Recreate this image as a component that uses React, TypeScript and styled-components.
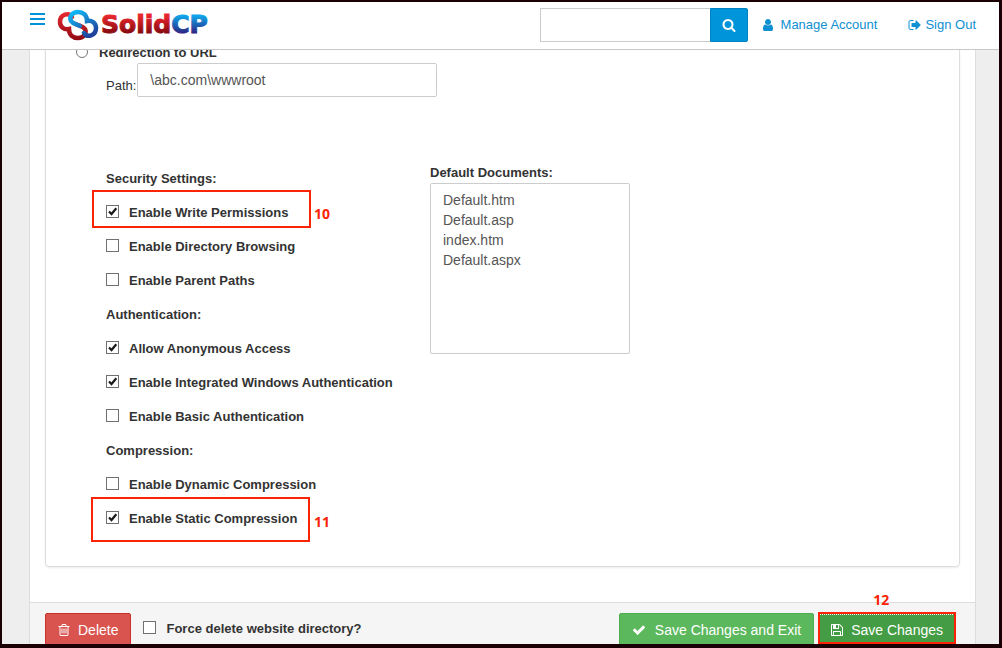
import React from "react";
import styled, { createGlobalStyle, css } from "styled-components";

const GlobalStyle = createGlobalStyle`
  *, *::before, *::after { box-sizing: border-box; }
  body {
    margin: 0;
    font-family: "Liberation Sans", Arial, sans-serif;
    font-size: 13px;
    line-height: 20px;
    color: #333;
  }
`;

const Frame = styled.div`
  display: flex;
  flex-direction: column;
  height: 100vh;
  overflow: hidden;
  border: solid #1a0005;
  border-width: 2px 3px 4px 2px;
  background: #eee;
`;

const Header = styled.header`
  display: flex;
  align-items: center;
  flex: none;
  height: 48px;
  padding: 0 23px 1px 28px;
  border-bottom: 1px solid #c8c8c8;
  background: #fff;
`;

const MenuButton = styled.button`
  display: flex;
  flex-direction: column;
  gap: 3px;
  width: 15px;
  margin: 0 12px 12px 0;
  padding: 0;
  border: 0;
  background: none;
`;

const MenuBar = styled.span`
  height: 2px;
  width: 15px;
  background: #0092d8;
`;

const LogoLink = styled.a`
  display: flex;
  margin-right: auto;
`;

const SearchForm = styled.form`
  display: flex;
  height: 34px;
  margin-right: 13px;
`;

const SearchInput = styled.input`
  width: 170px;
  padding: 6px 12px;
  border: 1px solid #ccc;
  border-right: 0;
  font: 14px "Liberation Sans", Arial, sans-serif;
`;

const SearchButton = styled.button`
  display: flex;
  align-items: center;
  justify-content: center;
  width: 38px;
  padding: 0;
  border: 1px solid #0083c2;
  border-radius: 0 2px 2px 0;
  background: #0095db;
  color: #fff;
`;

const Nav = styled.nav`
  display: flex;
  gap: 31px;
`;

const NavLink = styled.a<{ $gap: number }>`
  display: flex;
  align-items: center;
  gap: ${(p) => p.$gap}px;
  color: #0e90d2;
  text-decoration: none;
`;

const Viewport = styled.main`
  flex: 1;
  min-height: 0;
  overflow: hidden;
  padding: 0 23px 0 27px;
`;

const Panel = styled.section`
  border: solid #ddd;
  border-width: 0 1px;
  background: #fff;
`;

const PanelBody = styled.div`
  display: flow-root;
  padding: 0 15px 35px;
`;

/* The page is scrolled, so the card begins above the visible area. */
const Card = styled.div`
  margin-top: -8px;
  padding: 0 30px 30px;
  border: 1px solid #ddd;
  border-radius: 4px;
  box-shadow: 0 1px 2px rgba(0, 0, 0, 0.08);
`;

const RadioRow = styled.label`
  display: flex;
  align-items: center;
  gap: 11px;
  font-weight: bold;
`;

const Radio = styled.input`
  width: 12px;
  height: 12px;
  margin: 0 0 2px;
`;

const Fields = styled.div`
  padding-left: 30px;
`;

const PathRow = styled.label`
  display: flex;
  align-items: flex-end;
  gap: 1px;
  margin-bottom: 65px;
  line-height: 22px;
`;

const PathInput = styled.input`
  width: 300px;
  height: 34px;
  padding: 6px 12px;
  border: 1px solid #ccc;
  border-radius: 2px;
  color: #555;
  font: 14px "Liberation Sans", Arial, sans-serif;
`;

const Columns = styled.div`
  display: grid;
  grid-template-columns: 324px 200px;
  align-items: start;
`;

const GroupTitle = styled.h2`
  margin: 0;
  font-size: 13px;
  line-height: 34px;
`;

const OptionRow = styled.div`
  position: relative;
  display: flex;
  align-items: center;
  height: 34px;
`;

const CheckLabel = styled.label`
  display: flex;
  align-items: center;
  gap: 10px;
  font-weight: bold;
`;

const CheckBoxWrap = styled.span`
  display: grid;
  width: 13px;
  height: 13px;
  margin-bottom: 4px;
  > * { grid-area: 1 / 1; }
  > svg { pointer-events: none; visibility: hidden; }
  > input:checked + svg { visibility: visible; }
`;

const CheckInput = styled.input`
  appearance: none;
  width: 13px;
  height: 13px;
  margin: 0;
  border: 1px solid #707070;
  background: #fff;
`;

const DocsLabel = styled.label`
  display: block;
  font-weight: bold;
  line-height: 21px;
`;

const DocsSelect = styled.select`
  display: block;
  width: 100%;
  height: 171px;
  padding: 8px 10px;
  overflow: hidden;
  border: 1px solid #ccc;
  border-radius: 2px;
  background: #fff;
  color: #555;
  font: 14px "Liberation Sans", Arial, sans-serif;
  option {
    min-height: 20px;
    padding: 0 2px;
    line-height: 20px;
  }
`;

const Footer = styled.footer`
  display: flex;
  align-items: flex-start;
  padding: 10px 19px 10px 15px;
  border-top: 1px solid #ddd;
  background: #f5f5f5;
`;

const ForceOption = styled.div`
  display: flex;
  align-items: center;
  height: 32px;
  margin: 0 auto 0 12px;
`;

const tones = {
  danger: css`background: #d9534f; border-color: #c9302c;`,
  success: css`gap: 9px; padding-left: 12px; background: #5cb85c; border-color: #4cae4c;`,
  active: css`
    background: #449d44;
    border-color: #255625;
    outline: 1px dotted #fff;
    outline-offset: -2px;
  `,
};

const Button = styled.button<{ $tone: keyof typeof tones }>`
  display: flex;
  align-items: center;
  gap: 7px;
  height: 34px;
  padding: 0 12px 0 11px;
  border: 1px solid;
  border-radius: 2px;
  color: #fff;
  font: 14px "Liberation Sans", Arial, sans-serif;
  white-space: nowrap;
  ${(p) => tones[p.$tone]}
`;

const SaveGroup = styled.div`
  position: relative;
  margin-left: 4px;
`;

const Callout = styled.span<{ $top: number; $left: number; $width: number; $height: number }>`
  position: absolute;
  top: ${(p) => p.$top}px;
  left: ${(p) => p.$left}px;
  width: ${(p) => p.$width}px;
  height: ${(p) => p.$height}px;
  border: 2px solid #fb2407;
  pointer-events: none;
`;

const CalloutNumber = styled.span<{ $top: number; $left: number }>`
  position: absolute;
  top: ${(p) => p.$top}px;
  left: ${(p) => p.$left}px;
  color: #fb2407;
  font: bold 14px/20px "Open Sans", "Noto Sans", sans-serif;
`;

const paths = {
  search:
    "M1216 832q0-185-131.5-316.5t-316.5-131.5-316.5 131.5-131.5 316.5 131.5 316.5 316.5 131.5 316.5-131.5 131.5-316.5zm512 832q0 52-38 90t-90 38q-54 0-90-38l-343-342q-179 124-399 124-143 0-273.5-55.5t-225-150-150-225-55.5-273.5 55.5-273.5 150-225 225-150 273.5-55.5 273.5 55.5 225 150 150 225 55.5 273.5q0 220-124 399l343 343q37 37 37 90z",
  user:
    "M1536 1399q0 109-62.5 187t-150.5 78h-854q-88 0-150.5-78t-62.5-187q0-85 8.5-160.5t31.5-152 58.5-131 94-89 134.5-34.5q131 128 313 128t313-128q76 0 134.5 34.5t94 89 58.5 131 31.5 152 8.5 160.5zm-256-887q0 159-112.5 271.5t-271.5 112.5-271.5-112.5-112.5-271.5 112.5-271.5 271.5-112.5 271.5 112.5 112.5 271.5z",
  signOut:
    "M704 1440q0 4 1 20t.5 26.5-3 23.5-10 19.5-20.5 6.5h-320q-119 0-203.5-84.5t-84.5-203.5v-704q0-119 84.5-203.5t203.5-84.5h320q13 0 22.5 9.5t9.5 22.5q0 4 1 20t.5 26.5-3 23.5-10 19.5-20.5 6.5h-320q-66 0-113 47t-47 113v704q0 66 47 113t113 47h312l11.5 1 11.5 3 8 5.5 7 9 2 13.5zm928-544q0 26-19 45l-544 544q-19 19-45 19t-45-19-19-45v-288h-448q-26 0-45-19t-19-45v-384q0-26 19-45t45-19h448v-288q0-26 19-45t45-19 45 19l544 544q19 19 19 45z",
  check:
    "M1671 566q0 40-28 68l-724 724-136 136q-28 28-68 28t-68-28l-136-136-362-362q-28-28-28-68t28-68l136-136q28-28 68-28t68 28l294 295 656-657q28-28 68-28t68 28l136 136q28 28 28 68z",
  trash:
    "M704 736v576q0 14-9 23t-23 9h-64q-14 0-23-9t-9-23v-576q0-14 9-23t23-9h64q14 0 23 9t9 23zm256 0v576q0 14-9 23t-23 9h-64q-14 0-23-9t-9-23v-576q0-14 9-23t23-9h64q14 0 23 9t9 23zm256 0v576q0 14-9 23t-23 9h-64q-14 0-23-9t-9-23v-576q0-14 9-23t23-9h64q14 0 23 9t9 23zm128 724v-948h-896v948q0 22 7 40.5t14.5 27 10.5 8.5h832q3 0 10.5-8.5t14.5-27 7-40.5zm-672-1076h448l-48-117q-7-9-17-11h-317q-10 2-17 11zm928 32v64q0 14-9 23t-23 9h-96v948q0 83-47 143.5t-113 60.5h-832q-66 0-113-58.5t-47-141.5v-952h-96q-14 0-23-9t-9-23v-64q0-14 9-23t23-9h309l70-167q15-37 54-63t79-26h320q40 0 79 26t54 63l70 167h309q14 0 23 9t9 23z",
  floppy:
    "M512 1536h768v-384h-768v384zm896 0h128v-896q0-14-10-38.5t-20-34.5l-281-281q-10-10-34-20t-39-10v416q0 40-28 68t-68 28h-576q-40 0-68-28t-28-68v-416h-128v1280h128v-416q0-40 28-68t68-28h832q40 0 68 28t28 68v416zm-384-928v-320q0-13-9.5-22.5t-22.5-9.5h-192q-13 0-22.5 9.5t-9.5 22.5v320q0 13 9.5 22.5t22.5 9.5h192q13 0 22.5-9.5t9.5-22.5zm640 32v928q0 40-28 68t-68 28h-1344q-40 0-68-28t-28-68v-1344q0-40 28-68t68-28h928q40 0 88 20t76 48l280 280q28 28 48 76t20 88z",
};

function Icon({ name, size = 14 }: { name: keyof typeof paths; size?: number }) {
  return (
    <svg width={size} height={size} viewBox="0 0 1792 1792" fill="currentColor" aria-hidden="true">
      <path d={paths[name]} />
    </svg>
  );
}

const ribbon =
  "M-6 -8C-9 -13 -18 -11 -18 -3C-18 2 -14 5 -9 4C-9 10 -5 13 0 13C6 13 9 8 7 4C5 1 1 1 -2 -1";

function Logo() {
  return (
    <svg width="154" height="34" viewBox="0 0 154 34" role="img" aria-label="SolidCP">
      <defs>
        <linearGradient id="redMark" x1="0" y1="-12" x2="0" y2="15" gradientUnits="userSpaceOnUse">
          <stop offset="0" stopColor="#e52a30" />
          <stop offset="1" stopColor="#900a12" />
        </linearGradient>
        <linearGradient id="blueMark" x1="0" y1="15" x2="-14" y2="-10" gradientUnits="userSpaceOnUse">
          <stop offset="0" stopColor="#12b5f4" />
          <stop offset="1" stopColor="#20409a" />
        </linearGradient>
        <linearGradient id="redText" x1="0" y1="8" x2="0" y2="25" gradientUnits="userSpaceOnUse">
          <stop offset="0" stopColor="#e8262c" />
          <stop offset="1" stopColor="#860a10" />
        </linearGradient>
        <linearGradient id="blueText" x1="0" y1="8" x2="0" y2="25" gradientUnits="userSpaceOnUse">
          <stop offset="0" stopColor="#0fa5ea" />
          <stop offset="1" stopColor="#2b2483" />
        </linearGradient>
      </defs>
      <g transform="translate(21 17)" fill="none" strokeWidth="4.5" strokeLinecap="round">
        <path d={ribbon} stroke="url(#redMark)" />
        <path d={ribbon} transform="rotate(180)" stroke="url(#blueMark)" />
      </g>
      <text
        x="44"
        y="25"
        fontFamily="'DejaVu Sans', sans-serif"
        fontWeight="bold"
        fontSize="25"
        strokeWidth="1"
      >
        <tspan fill="url(#redText)" stroke="url(#redText)">Solid</tspan>
        <tspan fill="url(#blueText)" stroke="url(#blueText)">CP</tspan>
      </text>
    </svg>
  );
}

function CheckOption({ label, checked }: { label: string; checked?: boolean }) {
  return (
    <CheckLabel>
      <CheckBoxWrap>
        <CheckInput type="checkbox" defaultChecked={checked} />
        <svg width="13" height="13" viewBox="0 0 13 13" aria-hidden="true">
          <path d="M3 6.5L5.5 9L10.3 3.2" fill="none" stroke="#1a1a1a" strokeWidth="2.2" />
        </svg>
      </CheckBoxWrap>
      {label}
    </CheckLabel>
  );
}

export default function App() {
  return (
    <>
      <GlobalStyle />
      <Frame>
        <Header>
          <MenuButton type="button" aria-label="Menu">
            <MenuBar />
            <MenuBar />
            <MenuBar />
          </MenuButton>
          <LogoLink href="#">
            <Logo />
          </LogoLink>
          <SearchForm>
            <SearchInput type="text" aria-label="Search" />
            <SearchButton type="button" aria-label="Submit search">
              <Icon name="search" />
            </SearchButton>
          </SearchForm>
          <Nav>
            <NavLink href="#" $gap={6}>
              <Icon name="user" />
              Manage Account
            </NavLink>
            <NavLink href="#" $gap={3}>
              <Icon name="signOut" />
              Sign Out
            </NavLink>
          </Nav>
        </Header>
        <Viewport>
          <Panel>
            <PanelBody>
              <Card>
                <RadioRow>
                  <Radio type="radio" name="location" />
                  Redirection to URL
                </RadioRow>
                <Fields>
                  <PathRow>
                    Path:
                    <PathInput type="text" defaultValue="\abc.com\wwwroot" />
                  </PathRow>
                  <Columns>
                    <div>
                      <GroupTitle>Security Settings:</GroupTitle>
                      <OptionRow>
                        <CheckOption label="Enable Write Permissions" checked />
                        <Callout $top={-6} $left={-14} $width={219} $height={38} />
                        <CalloutNumber $top={8} $left={208}>10</CalloutNumber>
                      </OptionRow>
                      <OptionRow>
                        <CheckOption label="Enable Directory Browsing" />
                      </OptionRow>
                      <OptionRow>
                        <CheckOption label="Enable Parent Paths" />
                      </OptionRow>
                      <GroupTitle>Authentication:</GroupTitle>
                      <OptionRow>
                        <CheckOption label="Allow Anonymous Access" checked />
                      </OptionRow>
                      <OptionRow>
                        <CheckOption label="Enable Integrated Windows Authentication" checked />
                      </OptionRow>
                      <OptionRow>
                        <CheckOption label="Enable Basic Authentication" />
                      </OptionRow>
                      <GroupTitle>Compression:</GroupTitle>
                      <OptionRow>
                        <CheckOption label="Enable Dynamic Compression" />
                      </OptionRow>
                      <OptionRow>
                        <CheckOption label="Enable Static Compression" checked />
                        <Callout $top={-5} $left={-15} $width={219} $height={45} />
                        <CalloutNumber $top={10} $left={208}>11</CalloutNumber>
                      </OptionRow>
                    </div>
                    <div>
                      <DocsLabel htmlFor="documents">Default Documents:</DocsLabel>
                      <DocsSelect id="documents" multiple size={8}>
                        <option>Default.htm</option>
                        <option>Default.asp</option>
                        <option>index.htm</option>
                        <option>Default.aspx</option>
                      </DocsSelect>
                    </div>
                  </Columns>
                </Fields>
              </Card>
            </PanelBody>
            <Footer>
              <Button type="button" $tone="danger">
                <Icon name="trash" />
                Delete
              </Button>
              <ForceOption>
                <CheckOption label="Force delete website directory?" />
              </ForceOption>
              <Button type="button" $tone="success">
                <Icon name="check" />
                Save Changes and Exit
              </Button>
              <SaveGroup>
                <Button type="button" $tone="active">
                  <Icon name="floppy" />
                  Save Changes
                </Button>
                <Callout $top={-1} $left={0} $width={138} $height={32} />
                <CalloutNumber $top={-23} $left={55}>12</CalloutNumber>
              </SaveGroup>
            </Footer>
          </Panel>
        </Viewport>
      </Frame>
    </>
  );
}
